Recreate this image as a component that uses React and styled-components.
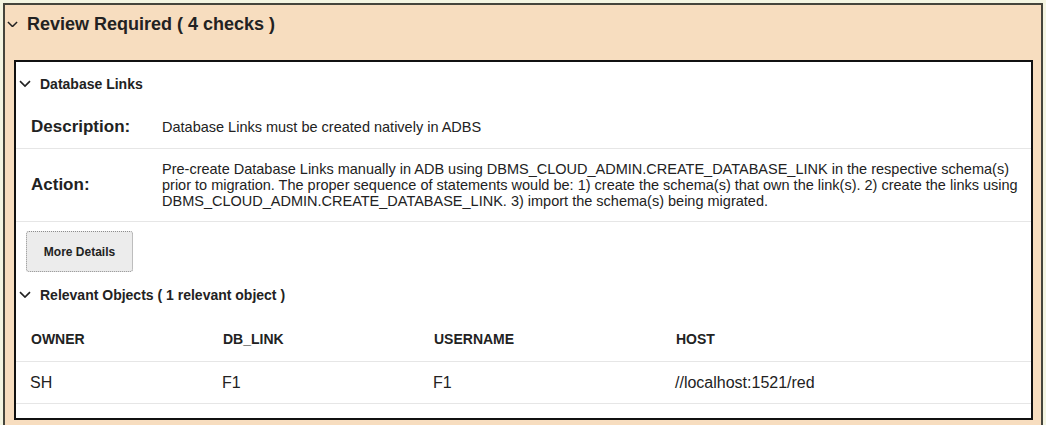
import React from 'react';
import styled, { createGlobalStyle } from 'styled-components';

const GlobalStyle = createGlobalStyle`
  html, body {
    margin: 0;
    padding: 0;
    background: #f4f5e2;
  }
  body {
    padding: 3px 3px 0 3px;
    font-family: "Liberation Sans", Arial, sans-serif;
    color: #222;
  }
`;

// Outer peach panel
const ReviewPanel = styled.section`
  background: #f7ddbf;
  border: 2px solid #45453c;
  padding: 0 8px 12px 9px;
`;

const PanelTitle = styled.div`
  display: flex;
  align-items: center;
  height: 55px;
  padding-bottom: 17px;
  box-sizing: border-box;
  gap: 9px;
  margin-left: -7px;
  font-size: 18px;
  font-weight: bold;
  color: #222;
`;

const Chevron = ({ w = 11 }) => (
  <svg width={w} height={w * 0.6} viewBox="0 0 12 7" fill="none">
    <polyline points="1,1 6,6 11,1" stroke="#222" strokeWidth="1.6" fill="none" />
  </svg>
);

// Inner white card
const CheckCard = styled.div`
  background: #fff;
  border: 2px solid #111;
`;

const SectionToggle = styled.div`
  display: flex;
  align-items: center;
  gap: 9px;
  padding-left: 3px;
  height: ${p => p.$height || 38}px;
  font-size: 14px;
  font-weight: bold;
  color: #222;
`;

const InfoRow = styled.div`
  display: grid;
  grid-template-columns: 131px 1fr;
  align-items: center;
  padding: ${p => p.$pad || '11px'} 10px ${p => p.$pad || '11px'} 15px;
  border-bottom: 1px solid #e6e6e6;
`;

const InfoLabel = styled.div`
  font-size: 17px;
  font-weight: bold;
  line-height: 20px;
  color: #222;
`;

const InfoValue = styled.div`
  font-size: 14.5px;
  line-height: 16px;
  color: #222;
`;

const ButtonBar = styled.div`
  padding: 9px 10px 0;
`;

const DetailsButton = styled.button`
  width: 107px;
  height: 41px;
  background: #ececec;
  border: 1px dotted #8d8d8d;
  border-radius: 3px;
  font-family: "Liberation Sans", Arial, sans-serif;
  font-size: 12px;
  font-weight: bold;
  color: #222;
  cursor: pointer;
`;

const ObjectsTable = styled.div`
  display: grid;
  grid-template-columns: 192px 211px 242px 1fr;
  color: #222;
  padding-bottom: 14px;
`;

const Cell = styled.div`
  display: flex;
  align-items: center;
  padding-left: ${p => (p.$head ? 15 : 14)}px;
  height: ${p => (p.$head ? 44 : 41)}px;
  font-size: ${p => (p.$head ? 14 : 16)}px;
  font-weight: ${p => (p.$head ? 'bold' : 'normal')};
  border-bottom: 1px solid #e6e6e6;
`;

const columns = ['OWNER', 'DB_LINK', 'USERNAME', 'HOST'];
const rows = [['SH', 'F1', 'F1', '//localhost:1521/red']];

export default function App() {
  return (
    <>
      <GlobalStyle />
      <ReviewPanel>
        <PanelTitle>
          <Chevron />
          <span>Review Required ( 4 checks )</span>
        </PanelTitle>
        <CheckCard>
          <SectionToggle $height={44}>
            <Chevron w={12} />
            <span>Database Links</span>
          </SectionToggle>
          <InfoRow>
            <InfoLabel>Description:</InfoLabel>
            <InfoValue>Database Links must be created natively in ADBS</InfoValue>
          </InfoRow>
          <InfoRow $pad="12px">
            <InfoLabel>Action:</InfoLabel>
            <InfoValue>
              Pre-create Database Links manually in ADB using DBMS_CLOUD_ADMIN.CREATE_DATABASE_LINK in the respective schema(s)
              prior to migration. The proper sequence of statements would be: 1) create the schema(s) that own the link(s). 2) create the links using
              DBMS_CLOUD_ADMIN.CREATE_DATABASE_LINK. 3) import the schema(s) being migrated.
            </InfoValue>
          </InfoRow>
          <ButtonBar>
            <DetailsButton>More Details</DetailsButton>
          </ButtonBar>
          <SectionToggle $height={45}>
            <Chevron w={12} />
            <span>Relevant Objects ( 1 relevant object )</span>
          </SectionToggle>
          <ObjectsTable>
            {columns.map(c => (
              <Cell key={c} $head>{c}</Cell>
            ))}
            {rows.map((r, i) =>
              r.map((v, j) => <Cell key={`${i}-${j}`}>{v}</Cell>)
            )}
          </ObjectsTable>
        </CheckCard>
      </ReviewPanel>
    </>
  );
}
